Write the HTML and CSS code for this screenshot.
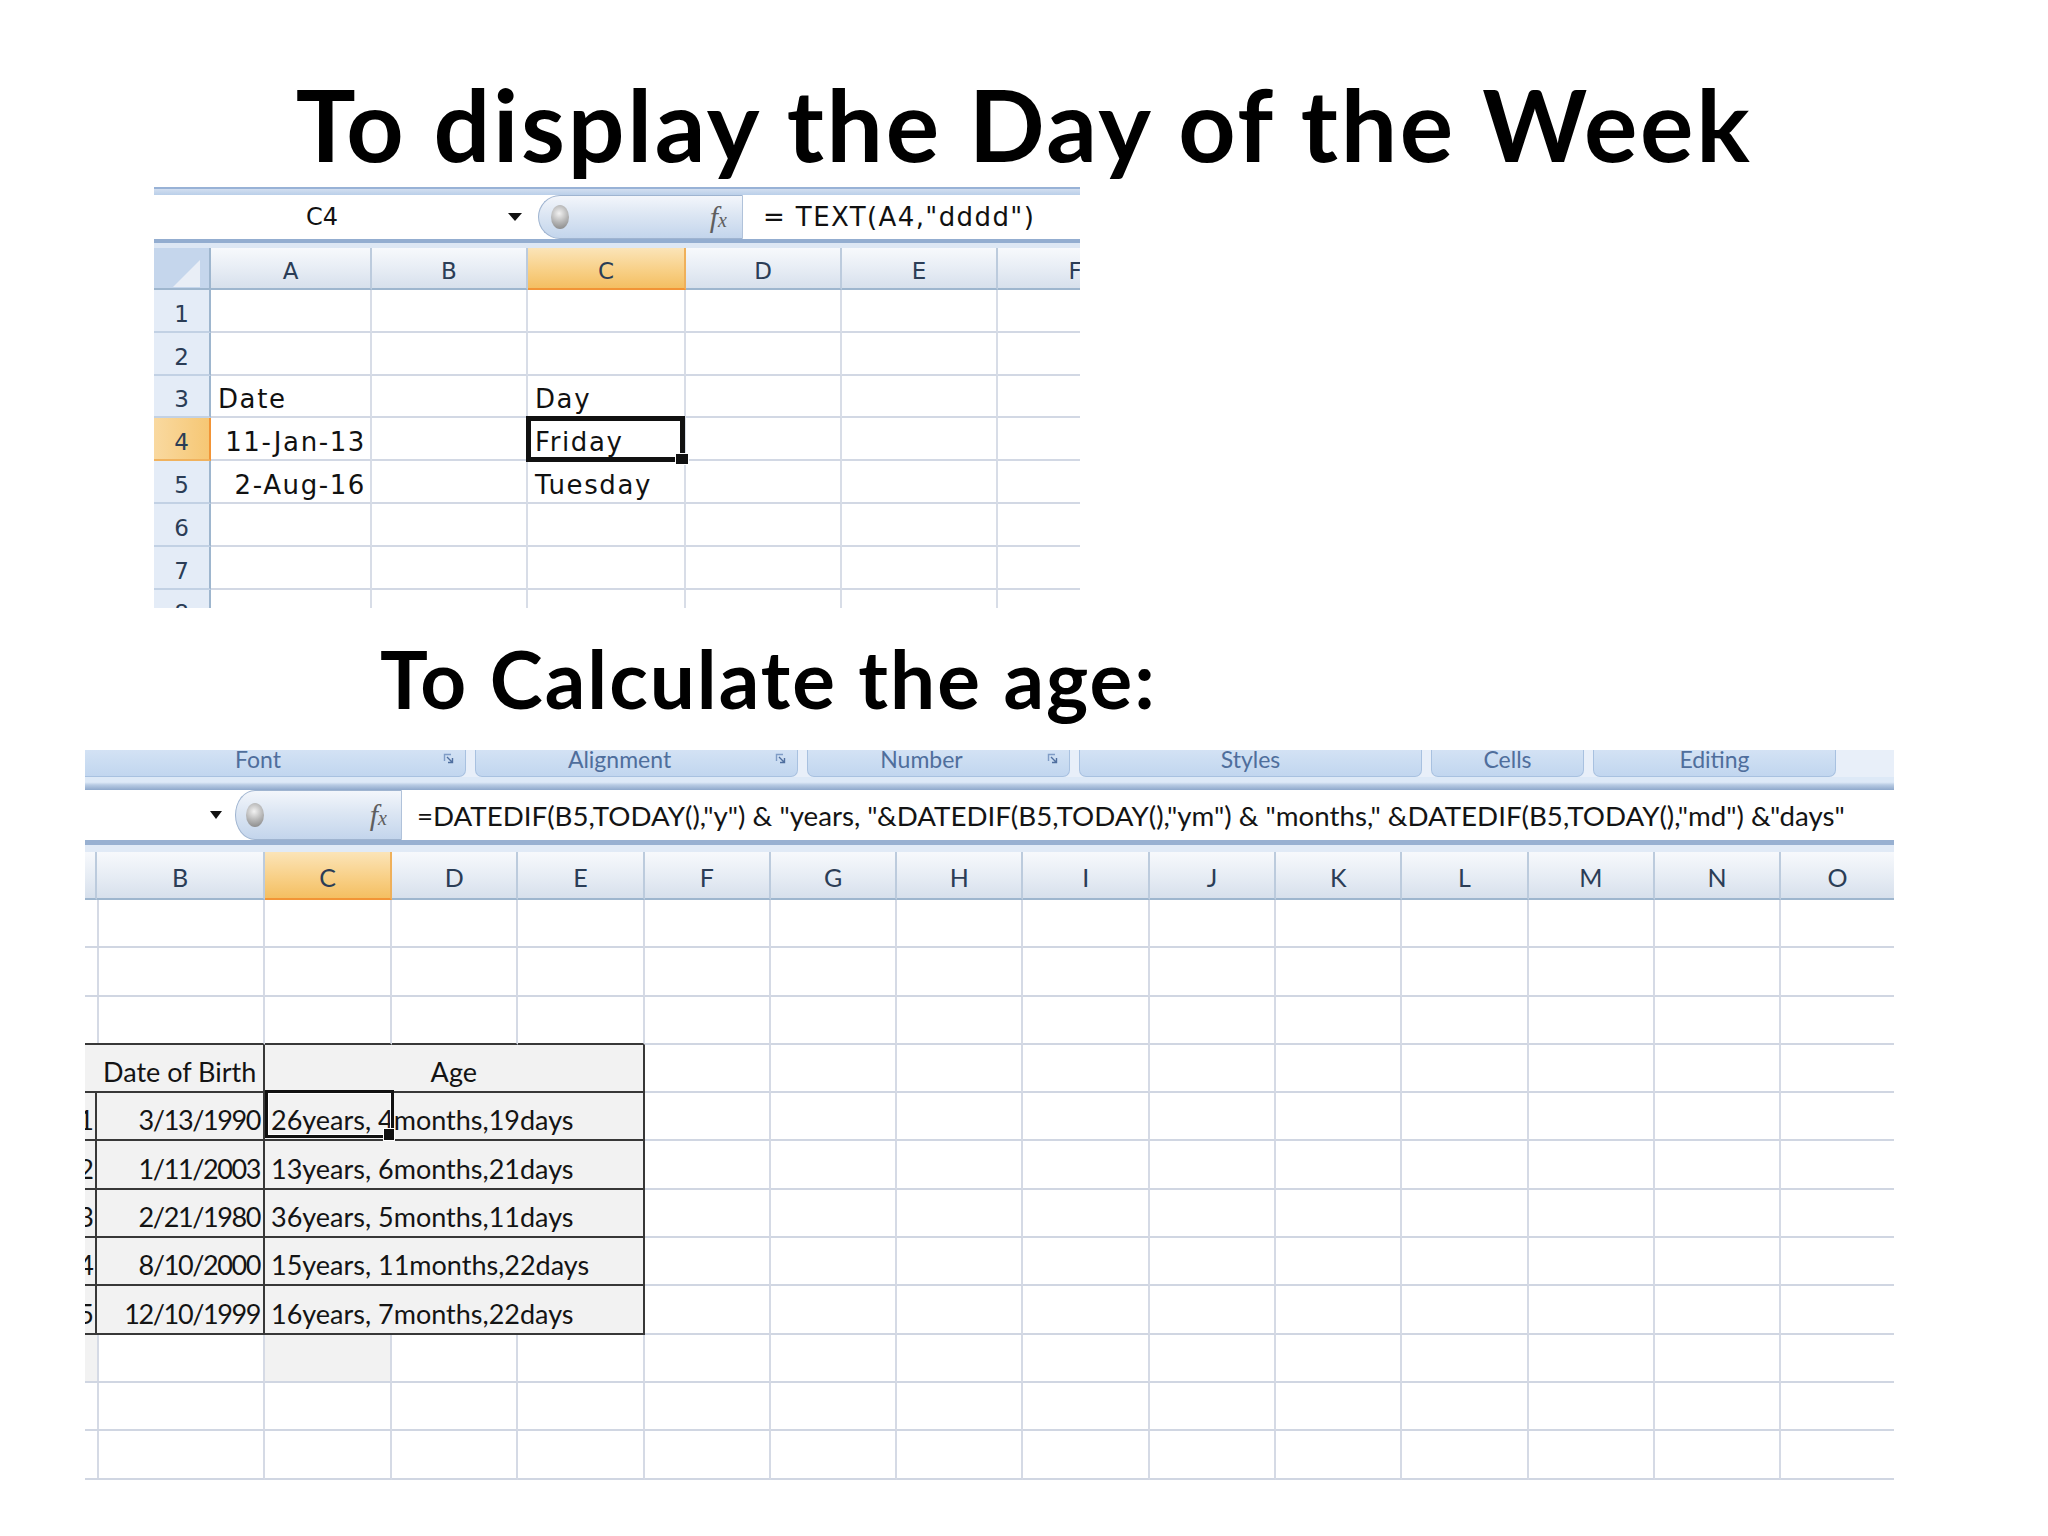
FILE: index.html
```html
<!DOCTYPE html>
<html>
<head>
  <title>Excel date formulas</title>
  <link rel="stylesheet" href="styles.css">
</head>
<body>
  <main class="slide">
    <h1 class="title title-week">To display the Day of the Week</h1>

    <!-- first screenshot: TEXT() formula -->
    <section class="sheet sheet-day">
      <div class="band"></div>
      <div class="fbar">
        <div class="namebox"><span class="ref">C4</span><span class="drop"></span></div>
        <div class="fx-pill"><span class="ball"></span><span class="fx">f<small>x</small></span></div>
        <div class="formula">= TEXT(A4,"dddd")</div>
      </div>
      <div class="fbar-sep"></div>
      <div class="dhead">
        <span class="corner"><i class="corner-tri"></i></span>
        <span class="ch">A</span>
        <span class="ch">B</span>
        <span class="ch on">C</span>
        <span class="ch">D</span>
        <span class="ch">E</span>
        <span class="ch">F</span>
      </div>
      <div class="dbody">
        <div class="drow"><span class="rh">1</span><span class="c"></span><span class="c"></span><span class="c"></span><span class="c"></span><span class="c"></span><span class="c"></span></div>
        <div class="drow"><span class="rh">2</span><span class="c"></span><span class="c"></span><span class="c"></span><span class="c"></span><span class="c"></span><span class="c"></span></div>
        <div class="drow"><span class="rh">3</span><span class="c">Date</span><span class="c"></span><span class="c">Day</span><span class="c"></span><span class="c"></span><span class="c"></span></div>
        <div class="drow"><span class="rh on">4</span><span class="c r">11-Jan-13</span><span class="c"></span><span class="c sel">Friday<i class="pick pick-day"></i></span><span class="c"></span><span class="c"></span><span class="c"></span></div>
        <div class="drow"><span class="rh">5</span><span class="c r">2-Aug-16</span><span class="c"></span><span class="c">Tuesday</span><span class="c"></span><span class="c"></span><span class="c"></span></div>
        <div class="drow"><span class="rh">6</span><span class="c"></span><span class="c"></span><span class="c"></span><span class="c"></span><span class="c"></span><span class="c"></span></div>
        <div class="drow"><span class="rh">7</span><span class="c"></span><span class="c"></span><span class="c"></span><span class="c"></span><span class="c"></span><span class="c"></span></div>
        <div class="drow"><span class="rh">8</span><span class="c"></span><span class="c"></span><span class="c"></span><span class="c"></span><span class="c"></span><span class="c"></span></div>
      </div>
    </section>

    <h2 class="title title-age">To Calculate the age:</h2>

    <!-- second screenshot: DATEDIF formula -->
    <section class="sheet sheet-age">
      <div class="ribbon">
        <div class="grp grp-font"><span class="grp-label">Font</span><span class="launch"><svg width="11" height="11" viewBox="0 0 11 11"><path d="M1.5 8V1.5H8" fill="none" stroke="#7f9cc6" stroke-width="1.4"/><path d="M4 4l5 5M9.5 5v4.5H5" fill="none" stroke="#4f6f9f" stroke-width="1.4"/></svg></span></div>
        <div class="grp grp-align"><span class="grp-label">Alignment</span><span class="launch"><svg width="11" height="11" viewBox="0 0 11 11"><path d="M1.5 8V1.5H8" fill="none" stroke="#7f9cc6" stroke-width="1.4"/><path d="M4 4l5 5M9.5 5v4.5H5" fill="none" stroke="#4f6f9f" stroke-width="1.4"/></svg></span></div>
        <div class="grp grp-number"><span class="grp-label">Number</span><span class="launch"><svg width="11" height="11" viewBox="0 0 11 11"><path d="M1.5 8V1.5H8" fill="none" stroke="#7f9cc6" stroke-width="1.4"/><path d="M4 4l5 5M9.5 5v4.5H5" fill="none" stroke="#4f6f9f" stroke-width="1.4"/></svg></span></div>
        <div class="grp grp-styles"><span class="grp-label">Styles</span></div>
        <div class="grp grp-cells"><span class="grp-label">Cells</span></div>
        <div class="grp grp-editing"><span class="grp-label">Editing</span></div>
      </div>
      <div class="ribbon-sep"></div>
      <div class="fbar fbar-age">
        <div class="namebox"><span class="drop"></span></div>
        <div class="fx-pill"><span class="ball"></span><span class="fx">f<small>x</small></span></div>
        <div class="formula">=DATEDIF(B5,TODAY(),"y") &amp; "years, "&amp;DATEDIF(B5,TODAY(),"ym") &amp; "months," &amp;DATEDIF(B5,TODAY(),"md") &amp;"days"</div>
      </div>
      <div class="fbar-sep"></div>
      <div class="xhead">
        <span class="ch"></span><span class="ch">B</span><span class="ch on">C</span><span class="ch">D</span><span class="ch">E</span><span class="ch">F</span><span class="ch">G</span><span class="ch">H</span><span class="ch">I</span><span class="ch">J</span><span class="ch">K</span><span class="ch">L</span><span class="ch">M</span><span class="ch">N</span><span class="ch">O</span>
      </div>
      <div class="xbody">
        <div class="xrow"><span></span><span></span><span></span><span></span><span></span><span></span><span></span><span></span><span></span><span></span><span></span><span></span><span></span><span></span><span></span></div>
        <div class="xrow"><span></span><span></span><span></span><span></span><span></span><span></span><span></span><span></span><span></span><span></span><span></span><span></span><span></span><span></span><span></span></div>
        <div class="xrow"><span class="tt"></span><span class="tt"></span><span class="tt"></span><span class="tt"></span><span class="tt"></span><span></span><span></span><span></span><span></span><span></span><span></span><span></span><span></span><span></span><span></span></div>
        <div class="xrow"><span class="t"></span><span class="t">Date of Birth</span><span class="t wide mid">Age</span><span></span><span></span><span></span><span></span><span></span><span></span><span></span><span></span><span></span><span></span></div>
        <div class="xrow"><span class="t idx">1</span><span class="t num">3/13/1990</span><span class="t wide">26years, 4months,19days<i class="pick pick-age"></i></span><span></span><span></span><span></span><span></span><span></span><span></span><span></span><span></span><span></span><span></span></div>
        <div class="xrow"><span class="t idx">2</span><span class="t num">1/11/2003</span><span class="t wide">13years, 6months,21days</span><span></span><span></span><span></span><span></span><span></span><span></span><span></span><span></span><span></span><span></span></div>
        <div class="xrow"><span class="t idx">3</span><span class="t num">2/21/1980</span><span class="t wide">36years, 5months,11days</span><span></span><span></span><span></span><span></span><span></span><span></span><span></span><span></span><span></span><span></span></div>
        <div class="xrow"><span class="t idx">4</span><span class="t num">8/10/2000</span><span class="t wide">15years, 11months,22days</span><span></span><span></span><span></span><span></span><span></span><span></span><span></span><span></span><span></span><span></span></div>
        <div class="xrow"><span class="t idx">5</span><span class="t num">12/10/1999</span><span class="t wide">16years, 7months,22days</span><span></span><span></span><span></span><span></span><span></span><span></span><span></span><span></span><span></span><span></span></div>
        <div class="xrow"><span class="g"></span><span></span><span class="g"></span><span></span><span></span><span></span><span></span><span></span><span></span><span></span><span></span><span></span><span></span><span></span><span></span></div>
        <div class="xrow"><span></span><span></span><span></span><span></span><span></span><span></span><span></span><span></span><span></span><span></span><span></span><span></span><span></span><span></span><span></span></div>
        <div class="xrow"><span></span><span></span><span></span><span></span><span></span><span></span><span></span><span></span><span></span><span></span><span></span><span></span><span></span><span></span><span></span></div>
      </div>
    </section>
  </main>
</body>
</html>
```

FILE: styles.css
```css
* {
  margin: 0;
  padding: 0;
  box-sizing: border-box;
}

body {
  background: #fff;
  width: 2048px;
  height: 1536px;
  overflow: hidden;
}

.slide {
  display: flex;
  flex-direction: column;
}

.title {
  font-family: Lato, "Open Sans", sans-serif;
  font-weight: 700;
  color: #000;
  line-height: 1.2;
  white-space: nowrap;
}

.title-week {
  font-size: 100px;
  letter-spacing: 2.7px;
  text-align: center;
  margin-top: 63px;
}

.title-age {
  font-size: 80px;
  letter-spacing: 2px;
  padding-left: 380px;
  margin-top: 22px;
}

/* shared excel chrome */
.fbar {
  display: flex;
  height: 44px;
  background: #fff;
}

.namebox {
  display: flex;
  align-items: center;
  width: 384px;
}

.ref {
  width: 336px;
  text-align: center;
  font-size: 24px;
}

.drop {
  margin-left: auto;
  margin-right: 16px;
  border-left: 7px solid transparent;
  border-right: 7px solid transparent;
  border-top: 8px solid #111;
}

.fx-pill {
  display: flex;
  align-items: center;
  width: 205px;
  padding: 0 15px 0 12px;
  background: linear-gradient(#f3f6fb, #dce6f3 45%, #c3d5ec);
  border: 1px solid #9fb4d0;
  border-right-color: #b0c2da;
  border-radius: 22px 0 0 22px;
}

.ball {
  width: 18px;
  height: 24px;
  border-radius: 50%;
  background: radial-gradient(circle at 45% 35%, #f2f2f2, #b4b4b4 50%, #7d7d7d);
}

.fx {
  margin-left: auto;
  font-family: "Liberation Serif", serif;
  font-style: italic;
  font-size: 30px;
  color: #5e5e5e;
  line-height: 1;
}

.fx small {
  font-size: 20px;
}

.formula {
  flex: 1;
  display: flex;
  align-items: center;
  padding-left: 20px;
  font-size: 26px;
  letter-spacing: 1.4px;
  white-space: nowrap;
  overflow: hidden;
}

.fbar-sep {
  height: 9px;
  background: linear-gradient(#93add0 0 4px, #dde7f4 4px);
}

.ch {
  display: flex;
  align-items: flex-end;
  justify-content: center;
  padding-bottom: 5px;
  background: linear-gradient(#f7f9fc, #e6ecf4 55%, #d7e0ec);
  border-right: 2px solid #bccbdd;
  border-bottom: 2px solid #9eb6ce;
  color: #2b3d56;
  font-size: 23px;
  line-height: 1;
}

.ch.on {
  background: linear-gradient(#fbe4b8, #f8d087 55%, #f4bf62);
  border-right-color: #efb05a;
  border-bottom-color: #f29436;
}

.pick {
  position: absolute;
  border: 4px solid #111;
}

.pick::after {
  content: '';
  position: absolute;
  background: #111;
  border: 1px solid #fff;
}

/* ---------- sheet 1 ---------- */
.sheet-day {
  width: 926px;
  margin: 4px 0 0 154px;
  overflow: hidden;
  font-family: "DejaVu Sans", Verdana, sans-serif;
  color: #111;
}

.band {
  height: 8px;
  background: linear-gradient(#98b2d6 0 2px, #d2def0 2px, #bacfe9);
}

.dhead,
.drow {
  display: grid;
  grid-template-columns: 57px 161px 156px 158px 156px 156px 156px;
}

.dhead {
  height: 42px;
}

.corner {
  display: flex;
  align-items: flex-end;
  justify-content: flex-end;
  padding: 0 9px 1px 0;
  background: #c5d6ec;
  border-right: 2px solid #9eb6ce;
  border-bottom: 2px solid #9eb6ce;
}

.corner-tri {
  width: 0;
  height: 0;
  border-left: 27px solid transparent;
  border-bottom: 27px solid #e9eef6;
}

.dbody {
  height: 318px;
  overflow: hidden;
}

.drow {
  height: 42.8px;
}

.rh {
  display: flex;
  align-items: flex-end;
  justify-content: center;
  padding-bottom: 5px;
  background: #e4ecf7;
  border-right: 2px solid #9eb6ce;
  border-bottom: 2px solid #c2d1e4;
  color: #2b3d56;
  font-size: 23px;
  line-height: 1;
}

.rh.on {
  background: linear-gradient(90deg, #f9d9a0, #f6c774);
  border-right-color: #f29436;
  border-bottom-color: #f0b25e;
}

.c {
  display: flex;
  align-items: flex-end;
  padding: 0 4px 4px 7px;
  border-right: 2px solid #d8dde7;
  border-bottom: 2px solid #d2d8e4;
  font-size: 26px;
  letter-spacing: 1.6px;
  line-height: 1;
  white-space: nowrap;
}

.c.r {
  justify-content: flex-end;
}

.sel {
  position: relative;
}

.pick-day {
  inset: -2px -1px -3px -2px;
  border-width: 5px;
}

.pick-day::after {
  right: -9px;
  bottom: -8px;
  width: 12px;
  height: 10px;
}

/* ---------- sheet 2 ---------- */
.sheet-age {
  width: 1809px;
  margin: 24px 0 0 85px;
  overflow: hidden;
  font-family: Lato, "Open Sans", sans-serif;
  color: #141414;
}

.ribbon {
  display: flex;
  gap: 9px;
  height: 27px;
  background: #e8eff9;
  overflow: hidden;
}

.grp {
  display: flex;
  background: linear-gradient(#d3e2f4, #c1d6ef);
  border: 1px solid #a8c1e0;
  border-top: none;
  border-radius: 0 0 7px 7px;
}

.grp-font { width: 381px; border-left: none; border-radius: 0 0 7px 0; }
.grp-align { width: 323px; }
.grp-number { width: 263px; }
.grp-styles { width: 343px; }
.grp-cells { width: 153px; }
.grp-editing { width: 243px; }

.grp-label {
  flex: 1;
  text-align: center;
  margin-top: -2px;
  color: #4f6e9c;
  font-size: 23px;
  line-height: 22px;
}

.launch {
  width: 34px;
  display: flex;
  justify-content: center;
  padding-top: 3px;
}

.ribbon-sep {
  height: 13px;
  background: linear-gradient(#dde9f7 0 40%, #b9cce4 60%, #8ea8cb);
}

.fbar-age {
  height: 50px;
}

.fbar-age .namebox {
  width: 150px;
}

.fbar-age .drop {
  margin-right: 13px;
  border-left-width: 6px;
  border-right-width: 6px;
}

.fbar-age .fx-pill {
  width: 167px;
  padding: 0 14px 0 10px;
  border-radius: 20px 0 0 20px / 25px 0 0 25px;
}

.fbar-age .formula {
  padding-left: 15px;
  font-size: 27.7px;
  letter-spacing: 0;
}

.sheet-age .fbar-sep {
  height: 12px;
  background: linear-gradient(#98b0d1 0 5px, #e1eaf6 5px);
}

.xhead,
.xrow {
  display: grid;
  grid-template-columns: 12px 168px 127px repeat(11, 126.3px) 112.7px;
}

.xhead {
  height: 48px;
}

.xhead .ch {
  padding-bottom: 8px;
  font-size: 25px;
}

.xhead .ch:last-child,
.xrow > span:last-child {
  border-right: none;
}

.xrow {
  height: 48.3px;
}

.xrow > span {
  display: flex;
  align-items: flex-end;
  padding: 0 6px 6px;
  border-right: 2px solid #d5dae5;
  border-bottom: 2px solid #d0d6e2;
  font-size: 27px;
  line-height: 1;
  white-space: nowrap;
}

.xrow > .wide {
  grid-column: span 3;
}

.xrow > .t {
  background: #f2f2f2;
  border-color: #383838;
}

.xrow > .tt {
  border-bottom-color: #383838;
}

.xrow > .g {
  background: #f2f2f2;
}

.xrow > .mid {
  justify-content: center;
}

.xrow > .num {
  justify-content: flex-end;
  padding-right: 3px;
  letter-spacing: -1.4px;
}

.xrow > .idx {
  justify-content: flex-end;
  padding-right: 1px;
  overflow: hidden;
}

.xrow > .wide:has(.pick) {
  position: relative;
}

.pick-age {
  left: 0;
  top: -3px;
  bottom: 1px;
  width: 129px;
  border-width: 3px;
  box-shadow: inset 0 0 0 1px #fff;
}

.pick-age::after {
  right: -4px;
  bottom: -6px;
  width: 10px;
  height: 11px;
}
```
